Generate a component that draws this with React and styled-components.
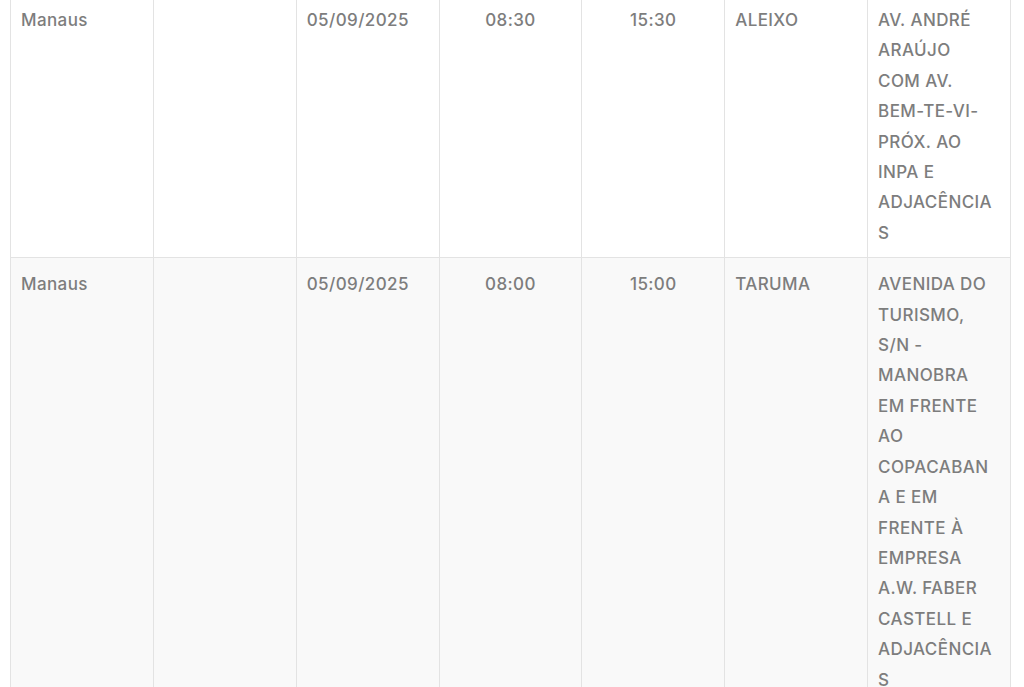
import React from 'react'
import styled, { createGlobalStyle } from 'styled-components'

const GlobalStyle = createGlobalStyle`
html, body {
  margin: 0;
  padding: 0;
  background: #ffffff;
  overflow: hidden;
}
body {
  font-family: Inter, "Open Sans", "Liberation Sans", sans-serif;
}
`

const Page = styled.div`
padding: 0 13px 0 10px;
`

const Table = styled.table`
width: 1001px;
margin-top: -7px;
border-collapse: collapse;
table-layout: fixed;
`

const Row = styled.tr`
background-color: ${props => props.$striped ? '#f9f9f9' : '#ffffff'};
`

const Cell = styled.td`
border: 1px solid #e3e3e3;
padding: ${props => props.$center ? '11px 12px 9px' : '11px 15px 9px 10px'};
vertical-align: top;
text-align: ${props => props.$center ? 'center' : 'left'};
font-size: 17px;
line-height: 30.4px;
font-weight: 500;
letter-spacing: 0.4px;
color: #7d7d7d;
overflow-wrap: break-word;
word-break: break-word;
`

const rows = [
  {
    city: 'Manaus',
    extra: '',
    date: '05/09/2025',
    start: '08:30',
    end: '15:30',
    district: 'ALEIXO',
    address: 'AV. ANDRÉ ARAÚJO COM AV. BEM-TE-VI-PRÓX. AO INPA E ADJACÊNCIAS',
  },
  {
    city: 'Manaus',
    extra: '',
    date: '05/09/2025',
    start: '08:00',
    end: '15:00',
    district: 'TARUMA',
    address: 'AVENIDA DO TURISMO, S/N - MANOBRA EM FRENTE AO COPACABANA E EM FRENTE À EMPRESA A.W. FABER CASTELL E ADJACÊNCIAS',
  },
]

export default function App() {
  return (
    <Page>
      <GlobalStyle />
      <Table>
        <tbody>
          {rows.map((r, i) => (
            <Row key={i} $striped={i % 2 === 1}>
              <Cell>{r.city}</Cell>
              <Cell>{r.extra}</Cell>
              <Cell>{r.date}</Cell>
              <Cell $center>{r.start}</Cell>
              <Cell $center>{r.end}</Cell>
              <Cell>{r.district}</Cell>
              <Cell>{r.address}</Cell>
            </Row>
          ))}
        </tbody>
      </Table>
    </Page>
  )
}
